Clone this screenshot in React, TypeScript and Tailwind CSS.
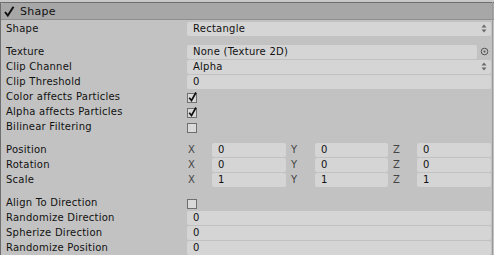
const FONT = "font-['DejaVu_Sans',sans-serif] text-[10px] leading-none tracking-[0.25px] text-[#111]"

const Field = ({ value, className = '' }: { value: string; className?: string }) => (
  <div className={`flex h-[14px] items-center rounded-[2px] bg-[#d5d5d5] pl-[6px] ${className}`}>
    <span>{value}</span>
  </div>
)

const Arrows = () => (
  <svg width="6" height="9" viewBox="0 0 6 9" className="shrink-0">
    <path d="M0.5 3.5 L3 0.5 L5.5 3.5 Z" fill="#6a6a6a" />
    <path d="M0.5 5.5 L3 8.5 L5.5 5.5 Z" fill="#6a6a6a" />
  </svg>
)

const CheckBox = ({ checked }: { checked: boolean }) => (
  <svg width="12" height="12" viewBox="0 0 12 12">
    <rect x="0.5" y="2.5" width="9" height="9" fill="#d9d9d9" stroke="#6f6f6f" />
    {checked && <path d="M2.2 6.8 L4.5 9.5 L9 1.5" fill="none" stroke="#111" strokeWidth="1.7" />}
  </svg>
)

const Row = ({ label, children }: { label: string; children?: React.ReactNode }) => (
  <div className="flex h-[15px] items-center">
    <div className="w-[187px] shrink-0 pl-[6px]">{label}</div>
    <div className="flex flex-1 items-center pr-[3px]">{children}</div>
  </div>
)

const Spacer = () => <div className="h-[8px]" />

const Vector = ({ x, y, z }: { x: string; y: string; z: string }) => (
  <div className="flex flex-1 items-center">
    <span className="w-[25px] pl-[1px] text-[#444]">X</span>
    <Field value={x} className="w-[74px]" />
    <span className="w-[29px] pl-[5px] text-[#444]">Y</span>
    <Field value={y} className="w-[73px]" />
    <span className="w-[29px] pl-[5px] text-[#444]">Z</span>
    <Field value={z} className="flex-1" />
  </div>
)

function App() {
  return (
    <div className={`relative h-[255px] w-[494px] overflow-hidden bg-[#c2c2c2] ${FONT}`}>
      <div className="h-[2px] bg-[#c8c8c8]" />
      <div className="h-[1px] bg-[#6e6e6e]" />
      <div className="flex h-[17px] items-center gap-[5px] rounded-tl-[4px] border-b border-[#8e8e8e] bg-[#a7a7a7] pl-[4px]">
        <svg width="11" height="11" viewBox="0 0 11 11">
          <path d="M1 6 L3.8 9.5 L9.5 0.8" fill="none" stroke="#111" strokeWidth="2" />
        </svg>
        <span className="text-[11px] text-[#111]">Shape</span>
      </div>
      <div className="flex flex-col pt-[1px]">
        <Row label="Shape">
          <div className="flex h-[14px] flex-1 items-center justify-between rounded-[2px] bg-[#d5d5d5] pl-[6px] pr-[4px]">
            <span>Rectangle</span>
            <Arrows />
          </div>
        </Row>
        <Spacer />
        <Row label="Texture">
          <Field value="None (Texture 2D)" className="flex-1" />
          <svg width="14" height="9" viewBox="0 0 14 9" className="shrink-0">
            <circle cx="7.5" cy="4.5" r="3.3" fill="none" stroke="#555" strokeWidth="1" />
            <circle cx="7.5" cy="4.5" r="1" fill="#555" />
          </svg>
        </Row>
        <Row label="Clip Channel">
          <div className="flex h-[14px] flex-1 items-center justify-between rounded-[2px] bg-[#d5d5d5] pl-[6px] pr-[4px]">
            <span>Alpha</span>
            <Arrows />
          </div>
        </Row>
        <Row label="Clip Threshold">
          <Field value="0" className="flex-1" />
        </Row>
        <Row label="Color affects Particles">
          <CheckBox checked />
        </Row>
        <Row label="Alpha affects Particles">
          <CheckBox checked />
        </Row>
        <Row label="Bilinear Filtering">
          <CheckBox checked={false} />
        </Row>
        <Spacer />
        <Row label="Position">
          <Vector x="0" y="0" z="0" />
        </Row>
        <Row label="Rotation">
          <Vector x="0" y="0" z="0" />
        </Row>
        <Row label="Scale">
          <Vector x="1" y="1" z="1" />
        </Row>
        <Spacer />
        <Row label="Align To Direction">
          <CheckBox checked={false} />
        </Row>
        <Row label="Randomize Direction">
          <Field value="0" className="flex-1" />
        </Row>
        <Row label="Spherize Direction">
          <Field value="0" className="flex-1" />
        </Row>
        <Row label="Randomize Position">
          <Field value="0" className="flex-1" />
        </Row>
      </div>
      <div className="absolute left-0 top-[2px] h-full w-[1px] bg-[#6e6e6e]" />
      <div className="absolute right-[1px] top-[2px] h-full w-[1px] bg-[#9a9a9a]" />
    </div>
  )
}

export default App
